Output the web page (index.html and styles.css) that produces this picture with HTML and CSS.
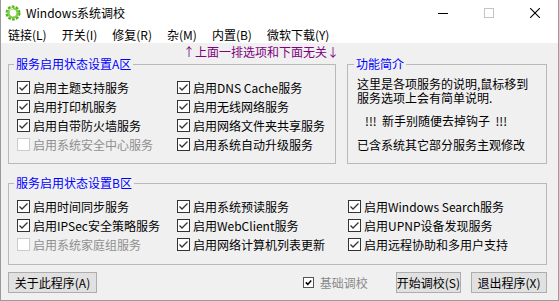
FILE: index.html
```html
<!DOCTYPE html>
<html lang="zh-CN">
<head>
    <meta charset="UTF-8">
    <title>Windows系统调校</title>
    <link rel="stylesheet" href="styles.css">
</head>
<body>
    <svg class="defs" width="0" height="0">
        <symbol id="tick" viewBox="0 0 11 11">
            <polyline points="1.5,5.5 4,8 9.5,2.5" fill="none" stroke="#333" stroke-width="1.3"/>
        </symbol>
    </svg>

    <div class="window">
        <!-- Title bar -->
        <div class="titlebar">
            <svg class="app-icon" width="16" height="16" viewBox="0 0 16 16">
                <circle cx="8" cy="8" r="6.2" fill="none" stroke="#4fae1e" stroke-width="2.6" stroke-dasharray="2.6 1.3"/>
                <circle cx="8" cy="8" r="4.6" fill="none" stroke="#7ed043" stroke-width="2.4"/>
                <circle cx="8" cy="8" r="2.4" fill="#fff"/>
                <path d="M4.5 5.5 A4.6 4.6 0 0 1 8 3.4" fill="none" stroke="#d8f5b8" stroke-width="1.4"/>
            </svg>
            <span class="title">Windows系统调校</span>
            <div class="caption">
                <span class="cap-btn">
                    <svg width="10" height="10" viewBox="0 0 10 10"><line x1="0" y1="5.5" x2="10" y2="5.5" stroke="#000"/></svg>
                </span>
                <span class="cap-btn">
                    <svg width="10" height="10" viewBox="0 0 10 10"><rect x="0.5" y="0.5" width="9" height="9" fill="none" stroke="#c4c4c4"/></svg>
                </span>
                <span class="cap-btn">
                    <svg width="10" height="10" viewBox="0 0 10 10"><path d="M0 0 L10 10 M10 0 L0 10" stroke="#000" stroke-width="1.1"/></svg>
                </span>
            </div>
        </div>

        <!-- Menu bar -->
        <div class="menubar">
            <span class="menu-item">链接(L)</span>
            <span class="menu-item">开关(I)</span>
            <span class="menu-item">修复(R)</span>
            <span class="menu-item">杂(M)</span>
            <span class="menu-item">内置(B)</span>
            <span class="menu-item">微软下载(Y)</span>
        </div>

        <div class="client">
            <div class="note">↑上面一排选项和下面无关↓</div>

            <div class="top-row">
                <fieldset class="group group-a">
                    <legend>服务启用状态设置A区</legend>
                    <div class="options cols-a">
                        <label class="opt"><span class="box"><svg><use href="#tick"/></svg></span>启用主题支持服务</label>
                        <label class="opt"><span class="box"><svg><use href="#tick"/></svg></span>启用DNS Cache服务</label>
                        <label class="opt"><span class="box"><svg><use href="#tick"/></svg></span>启用打印机服务</label>
                        <label class="opt"><span class="box"><svg><use href="#tick"/></svg></span>启用无线网络服务</label>
                        <label class="opt"><span class="box"><svg><use href="#tick"/></svg></span>启用自带防火墙服务</label>
                        <label class="opt"><span class="box"><svg><use href="#tick"/></svg></span>启用网络文件夹共享服务</label>
                        <label class="opt disabled"><span class="box"></span>启用系统安全中心服务</label>
                        <label class="opt"><span class="box"><svg><use href="#tick"/></svg></span>启用系统自动升级服务</label>
                    </div>
                </fieldset>

                <fieldset class="group group-info">
                    <legend>功能简介</legend>
                    <div class="info">
                        <p class="info-line">这里是各项服务的说明,鼠标移到</p>
                        <p class="info-line">服务选项上会有简单说明.</p>
                        <p class="info-warn">!!!&nbsp; 新手别随便去掉钩子 &nbsp;!!!</p>
                        <p class="info-last">已含系统其它部分服务主观修改</p>
                    </div>
                </fieldset>
            </div>

            <fieldset class="group group-b">
                <legend>服务启用状态设置B区</legend>
                <div class="options cols-b">
                    <label class="opt"><span class="box"><svg><use href="#tick"/></svg></span>启用时间同步服务</label>
                    <label class="opt"><span class="box"><svg><use href="#tick"/></svg></span>启用系统预读服务</label>
                    <label class="opt"><span class="box"><svg><use href="#tick"/></svg></span>启用Windows Search服务</label>
                    <label class="opt"><span class="box"><svg><use href="#tick"/></svg></span>启用IPSec安全策略服务</label>
                    <label class="opt"><span class="box"><svg><use href="#tick"/></svg></span>启用WebClient服务</label>
                    <label class="opt"><span class="box"><svg><use href="#tick"/></svg></span>启用UPNP设备发现服务</label>
                    <label class="opt disabled"><span class="box"></span>启用系统家庭组服务</label>
                    <label class="opt"><span class="box"><svg><use href="#tick"/></svg></span>启用网络计算机列表更新</label>
                    <label class="opt"><span class="box"><svg><use href="#tick"/></svg></span>启用远程协助和多用户支持</label>
                </div>
            </fieldset>

            <div class="bottom-row">
                <button class="btn btn-about">关于此程序(A)</button>
                <label class="basic">
                    <span class="mini-box">
                        <svg width="7" height="7" viewBox="0 0 7 7"><polyline points="0.8,3.4 2.8,5.4 6.2,1.4" fill="none" stroke="#000" stroke-width="1.5"/></svg>
                    </span>
                    基础调校
                </label>
                <button class="btn">开始调校(S)</button>
                <button class="btn">退出程序(X)</button>
            </div>
        </div>
    </div>
</body>
</html>
```

FILE: styles.css
```css
body {
    margin: 0;
    background-color: #ffffff;
    font-family: "Noto Sans CJK SC", "Noto Sans", sans-serif;
    font-size: 12px;
    color: #000000;
}
.defs {
    position: absolute;
}
.window {
    width: 557px;
    height: 300px;
    border: 1px solid #9a9a9a;
    border-top: none;
    display: flex;
    flex-direction: column;
    background-color: #f0f0f0;
    overflow: hidden;
}

/* title bar */
.titlebar {
    height: 26px;
    display: flex;
    align-items: center;
    background-color: #ffffff;
}
.app-icon {
    margin-left: 4px;
    margin-right: 5px;
}
.title {
    line-height: 26px;
    padding-bottom: 1px;
}
.caption {
    margin-left: auto;
    display: flex;
    height: 26px;
}
.cap-btn {
    width: 46px;
    display: flex;
    justify-content: center;
    align-items: center;
}

/* menu bar */
.menubar {
    height: 17px;
    display: flex;
    background-color: #ffffff;
}
.menu-item {
    padding: 1px 7px 0 7px;
    line-height: 16px;
    margin-right: 1px;
}

/* client area */
.client {
    flex: 1;
    padding: 0 11px 0 7px;
}
.note {
    height: 14px;
    line-height: 18px;
    padding-left: 175px;
    color: #800080;
}
.top-row {
    display: flex;
    gap: 11px;
}
.group {
    margin: 0;
    padding: 0;
    border: 1px solid #b9b9b9;
    min-width: 0;
}
.group legend {
    color: #0000ff;
    line-height: 14px;
    padding: 0 2px;
    margin-left: 5px;
}
.group-a {
    width: 326px;
}
.group-info {
    flex: 1;
}
.group-info legend {
    margin-left: 6px;
}
.group-b {
    margin-top: 12px;
}

/* checkbox options */
.options {
    display: grid;
    grid-auto-rows: 19px;
    padding: 7px 0 9px 8px;
}
.cols-a {
    grid-template-columns: 160px auto;
}
.cols-b {
    grid-template-columns: 160px 171px auto;
    padding-bottom: 10px;
}
.opt {
    display: flex;
    align-items: center;
    gap: 3px;
    white-space: nowrap;
}
.box {
    width: 11px;
    height: 11px;
    border: 1px solid #333333;
    background-color: #ffffff;
    display: flex;
}
.box svg {
    width: 11px;
    height: 11px;
}
.opt.disabled {
    color: #8f8f8f;
}
.opt.disabled .box {
    border-color: #cccccc;
}

/* info text */
.info {
    padding: 6px 0 0 9px;
}
.info p {
    margin: 0;
    line-height: 14px;
    white-space: nowrap;
}
.info-warn {
    margin-top: 9px !important;
    padding-left: 8px;
    white-space: pre !important;
}
.info-last {
    margin-top: 10px !important;
}

/* bottom buttons */
.bottom-row {
    display: flex;
    align-items: center;
    margin-top: 7px;
}
.btn {
    height: 21px;
    padding: 0;
    font-family: inherit;
    font-size: 12px;
    line-height: 19px;
    white-space: nowrap;
    background-color: #e1e1e1;
    border: 1px solid #adadad;
    color: #000000;
}
.btn-about {
    width: 89px;
    margin-right: auto;
}
.basic {
    display: flex;
    align-items: center;
    gap: 6px;
    color: #8a8a8a;
    margin-right: 28px;
}
.mini-box {
    width: 9px;
    height: 9px;
    border: 1px solid #555555;
    background-color: #ffffff;
    display: flex;
    justify-content: center;
    align-items: center;
}
.btn + .btn {
    margin-left: 10px;
    width: 76px;
}
```
